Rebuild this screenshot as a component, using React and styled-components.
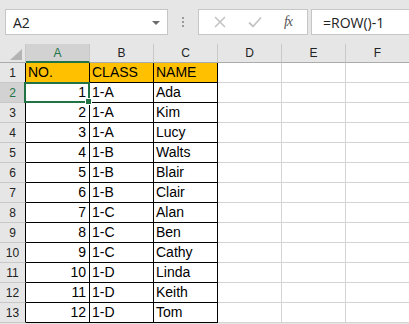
import React from "react";
import styled, { createGlobalStyle } from "styled-components";

const GlobalStyle = createGlobalStyle`
  html, body {
    margin: 0;
    padding: 0;
    background: #e6e6e6;
    overflow: hidden;
  }
  body {
    font-family: "Liberation Sans", Arial, sans-serif;
  }
`;

const GREEN = "#217346";

const Page = styled.div`
  width: 409px;
  height: 324px;
  overflow: hidden;
  background: #e6e6e6;
`;

const Toolbar = styled.div`
  height: 44px;
  display: flex;
  align-items: flex-start;
  padding: 9px 0 0 5px;
  box-sizing: border-box;
`;

const NameBox = styled.div`
  width: 163px;
  height: 26px;
  box-sizing: border-box;
  background: #fff;
  border: 1px solid #c6c6c6;
  display: flex;
  align-items: center;
  justify-content: space-between;
  padding: 0 7px 0 7px;
  font-family: "Open Sans", "Liberation Sans", sans-serif;
  font-size: 14px;
  color: #222;
`;

const Caret = styled.span`
  width: 0;
  height: 0;
  border-left: 4px solid transparent;
  border-right: 4px solid transparent;
  border-top: 4px solid #6d6d6d;
  margin-top: 1px;
`;

const Grip = styled.div`
  width: 30px;
  height: 26px;
  display: flex;
  flex-direction: column;
  align-items: center;
  justify-content: center;
  gap: 2px;
`;

const Dot = styled.span`
  width: 2px;
  height: 2px;
  background: #9a9a9a;
`;

const FxButtons = styled.div`
  width: 110px;
  height: 26px;
  box-sizing: border-box;
  background: #fff;
  border: 1px solid #c6c6c6;
  display: flex;
  align-items: center;
  justify-content: space-around;
  padding: 0 4px;
  margin-right: 3px;
`;

const FxLabel = styled.span`
  font-family: "Liberation Serif", serif;
  font-style: italic;
  font-size: 14px;
  color: #555;
  letter-spacing: -1px;
`;

const FormulaBox = styled.div`
  flex: 1;
  height: 26px;
  box-sizing: border-box;
  background: #fff;
  border: 1px solid #c6c6c6;
  border-right: none;
  display: flex;
  align-items: center;
  padding-left: 11px;
  font-family: "Open Sans", "Liberation Sans", sans-serif;
  font-size: 14px;
  color: #222;
`;

const Sheet = styled.div`
  display: grid;
  grid-template-columns: 26px repeat(6, 64px);
  grid-template-rows: 19px;
  grid-auto-rows: 20px;
  background: #fff;
`;

const Corner = styled.div`
  background: #e6e6e6;
  border-right: 1px solid #c8c8c8;
  border-bottom: 1px solid #ababab;
  box-sizing: border-box;
  display: flex;
  align-items: flex-end;
  justify-content: flex-end;
  padding: 0 3px 2px 0;
`;

const ColHead = styled.div`
  box-sizing: border-box;
  background: ${(p) => (p.$active ? "#d2d2d2" : "#e6e6e6")};
  color: ${(p) => (p.$active ? GREEN : "#222")};
  border-right: 1px solid #c8c8c8;
  border-bottom: ${(p) => (p.$active ? `2px solid ${GREEN}` : "1px solid #ababab")};
  display: flex;
  align-items: center;
  justify-content: center;
  font-size: 12px;
  padding-top: ${(p) => (p.$active ? "1px" : "0")};
`;

const RowHead = styled.div`
  box-sizing: border-box;
  background: ${(p) => (p.$active ? "#d2d2d2" : "#e6e6e6")};
  color: ${(p) => (p.$active ? GREEN : "#222")};
  border-right: 1px solid ${(p) => (p.$active ? GREEN : "#000")};
  border-bottom: 1px solid #c8c8c8;
  display: flex;
  align-items: center;
  justify-content: center;
  font-size: 12px;
  padding-top: 1px;
`;

const Cell = styled.div`
  position: relative;
  box-sizing: border-box;
  background: ${(p) => (p.$head ? "#ffc000" : "#fff")};
  border-right: 1px solid ${(p) => (p.$boxed ? "#000" : "#d4d4d4")};
  border-bottom: 1px solid ${(p) => (p.$boxed ? "#000" : "#d4d4d4")};
  display: flex;
  align-items: flex-end;
  justify-content: ${(p) => (p.$num ? "flex-end" : "flex-start")};
  padding: 0 3px 2px 2px;
  font-size: 14px;
  line-height: 16px;
  color: #000;
  white-space: nowrap;
`;

const Selection = styled.div`
  position: absolute;
  left: -2px;
  top: -1px;
  right: -1px;
  bottom: -1px;
  border: 2px solid ${GREEN};
  pointer-events: none;
  z-index: 2;
`;

const Handle = styled.div`
  position: absolute;
  right: -4px;
  bottom: -4px;
  width: 5px;
  height: 5px;
  background: ${GREEN};
  border: 1px solid #fff;
  z-index: 3;
`;

const cols = ["A", "B", "C", "D", "E", "F"];
const rows = [
  ["NO.", "CLASS", "NAME"],
  [1, "1-A", "Ada"],
  [2, "1-A", "Kim"],
  [3, "1-A", "Lucy"],
  [4, "1-B", "Walts"],
  [5, "1-B", "Blair"],
  [6, "1-B", "Clair"],
  [7, "1-C", "Alan"],
  [8, "1-C", "Ben"],
  [9, "1-C", "Cathy"],
  [10, "1-D", "Linda"],
  [11, "1-D", "Keith"],
  [12, "1-D", "Tom"],
];

const CrossIcon = () => (
  <svg width="12" height="12" viewBox="0 0 12 12">
    <path d="M1 1L11 11M11 1L1 11" stroke="#c4c4c4" strokeWidth="1.6" fill="none" />
  </svg>
);

const CheckIcon = () => (
  <svg width="14" height="12" viewBox="0 0 14 12">
    <path d="M1 6.5L5 10.5L13 1.5" stroke="#c4c4c4" strokeWidth="1.8" fill="none" />
  </svg>
);

export default function App() {
  return (
    <Page>
      <GlobalStyle />
      <Toolbar>
        <NameBox>
          <span>A2</span>
          <Caret />
        </NameBox>
        <Grip>
          <Dot />
          <Dot />
          <Dot />
        </Grip>
        <FxButtons>
          <CrossIcon />
          <CheckIcon />
          <FxLabel>fx</FxLabel>
        </FxButtons>
        <FormulaBox>=ROW()-1</FormulaBox>
      </Toolbar>
      <Sheet>
        <Corner>
          <svg width="12" height="11" viewBox="0 0 12 11">
            <path d="M12 0L12 11L0 11Z" fill="#b4b4b4" />
          </svg>
        </Corner>
        {cols.map((c) => (
          <ColHead key={c} $active={c === "A"}>
            {c}
          </ColHead>
        ))}
        {rows.map((r, i) => (
          <React.Fragment key={i}>
            <RowHead $active={i === 1}>{i + 1}</RowHead>
            {cols.map((c, j) => {
              const val = j < 3 ? r[j] : "";
              return (
                <Cell
                  key={c}
                  $boxed={j < 3}
                  $head={i === 0 && j < 3}
                  $num={typeof val === "number"}
                >
                  {val}
                  {i === 1 && j === 0 && (
                    <Selection>
                      <Handle />
                    </Selection>
                  )}
                </Cell>
              );
            })}
          </React.Fragment>
        ))}
      </Sheet>
    </Page>
  );
}
